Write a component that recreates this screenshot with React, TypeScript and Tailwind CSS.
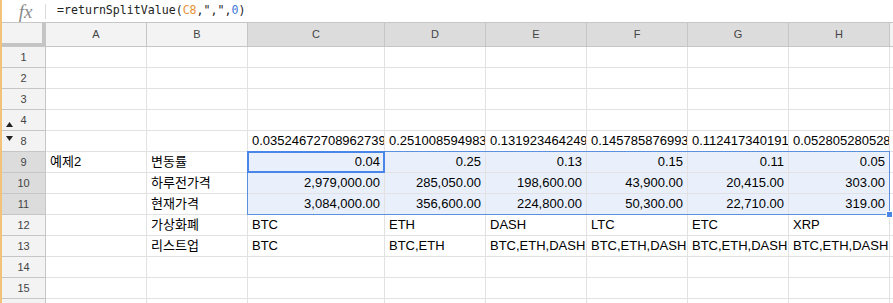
import React from 'react';

const cols = ['A', 'B', 'C', 'D', 'E', 'F', 'G', 'H'];
const widths = ['w-[101px]', 'w-[101px]', 'w-[137px]', 'w-[101px]', 'w-[101px]', 'w-[101px]', 'w-[101px]', 'w-[101px]'];

type Row = {
	n: string;
	cells: string[];
	right?: boolean;
	selected?: boolean;
	mark?: 'up' | 'down';
};

const rows: Row[] = [
	{ n: '1', cells: [] },
	{ n: '2', cells: [] },
	{ n: '3', cells: [] },
	{ n: '4', cells: [], mark: 'up' },
	{
		n: '8',
		mark: 'down',
		cells: ['', '', '0.03524672708962739', '0.25100859498338', '0.13192346424973', '0.14578587699316', '0.11241734019101', '0.05280528052805'],
	},
	{ n: '9', selected: true, right: true, cells: ['예제2', '변동률', '0.04', '0.25', '0.13', '0.15', '0.11', '0.05'] },
	{ n: '10', selected: true, right: true, cells: ['', '하루전가격', '2,979,000.00', '285,050.00', '198,600.00', '43,900.00', '20,415.00', '303.00'] },
	{ n: '11', selected: true, right: true, cells: ['', '현재가격', '3,084,000.00', '356,600.00', '224,800.00', '50,300.00', '22,710.00', '319.00'] },
	{ n: '12', cells: ['', '가상화폐', 'BTC', 'ETH', 'DASH', 'LTC', 'ETC', 'XRP'] },
	{ n: '13', cells: ['', '리스트업', 'BTC', 'BTC,ETH', 'BTC,ETH,DASH', 'BTC,ETH,DASH', 'BTC,ETH,DASH', 'BTC,ETH,DASH,LTC,ETC'] },
	{ n: '14', cells: [] },
	{ n: '15', cells: [] },
	{ n: '16', cells: [] },
];

const cellFont = "font-['Liberation_Sans','Noto_Sans_CJK_KR',sans-serif]";

export default function App() {
	return (
		<div className={`w-[893px] h-[303px] overflow-hidden bg-white border-l-2 border-[#f2c27a] ${cellFont} text-[13px] text-black`}>
			{/* formula bar */}
			<div className="flex items-center h-[23px] border-b border-[#c6c6c6]">
				<div className="w-[43px] h-full flex items-center justify-center">
					<span className="font-['Liberation_Serif',serif] italic text-[19px] text-[#8a8a8a] leading-none pl-1">fx</span>
				</div>
				<div className="w-px h-[15px] bg-[#dadada]"></div>
				<div className="pl-[11px] font-['DejaVu_Sans_Mono',monospace] text-[11.6px] text-[#222]">
					=returnSplitValue(<span className="text-[#e69138]">C8</span>,",",<span className="text-[#3c78d8]">0</span>)
				</div>
			</div>

			<div className="relative">
				{/* column headers */}
				<div className="flex h-[24px]">
					<div className="relative w-[44px] h-full bg-[#f3f3f3] border-r border-b border-[#c6c6c6]">
						<div className="absolute right-0 top-0 w-[3px] h-full bg-[#c4c4c4]"></div>
						<div className="absolute left-0 bottom-0 h-[3px] w-full bg-[#c4c4c4]"></div>
					</div>
					{cols.map((c, i) => (
						<div
							key={c}
							className={`${widths[i]} shrink-0 h-full flex items-center justify-center text-[11px] text-[#444] border-r border-b border-[#c6c6c6] ${
								i >= 2 ? 'bg-[#dcdcdc]' : 'bg-[#f3f3f3]'
							}`}
						>
							{c}
						</div>
					))}
					<div className="flex-1 h-full bg-[#f3f3f3] border-b border-[#c6c6c6]"></div>
				</div>

				{rows.map((r) => (
					<div key={r.n} className="flex h-[21px]">
						<div
							className={`relative w-[44px] shrink-0 h-full flex items-center justify-center text-[11px] text-[#444] border-r border-b border-[#c6c6c6] ${
								r.selected ? 'bg-[#dcdcdc]' : 'bg-[#f3f3f3]'
							}`}
						>
							{r.mark === 'up' && (
								<svg className="absolute left-[4px] top-[12px]" width="7" height="5" viewBox="0 0 7 5">
									<path d="M0 5 L3.5 0 L7 5 Z" fill="#222" />
								</svg>
							)}
							{r.mark === 'down' && (
								<svg className="absolute left-[4px] top-[5px]" width="7" height="5" viewBox="0 0 7 5">
									<path d="M0 0 L7 0 L3.5 5 Z" fill="#222" />
								</svg>
							)}
							{r.n}
						</div>
						{cols.map((c, i) => {
							const v = r.cells[i] ?? '';
							const sel = r.selected && i >= 2;
							const alignRight = r.right && i >= 2;
							return (
								<div
									key={c}
									className={`${widths[i]} shrink-0 h-full flex items-center overflow-hidden whitespace-nowrap border-r border-b border-[#e2e2e2] ${
										sel ? 'bg-[#e9f0fc]' : ''
									} ${alignRight ? 'justify-end pr-[4px]' : 'pl-[4px]'}`}
								>
									{v}
								</div>
							);
						})}
						<div className="flex-1 h-full border-b border-[#e2e2e2]"></div>
					</div>
				))}

				{/* selection range C9:H11 */}
				<div className="absolute left-[245px] top-[128px] w-[643px] h-[64px] border border-[#5b8fe0] pointer-events-none"></div>
				{/* active cell C9 */}
				<div className="absolute left-[245px] top-[128px] w-[138px] h-[22px] border-2 border-[#4a86e8] pointer-events-none"></div>
				{/* fill handle */}
				<div className="absolute left-[884px] top-[188px] w-[7px] h-[7px] bg-[#4a86e8] border border-white"></div>
			</div>
		</div>
	);
}
